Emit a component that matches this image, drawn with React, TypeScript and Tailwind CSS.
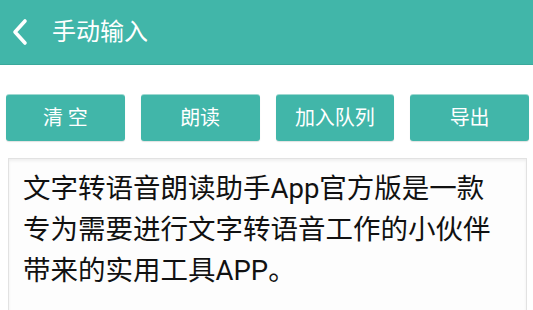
import React from "react";

const font = { fontFamily: '"Roboto", "Noto Sans CJK SC", sans-serif' };

export default function App() {
  return (
    <div className="w-[533px] h-[310px] overflow-hidden bg-white flex flex-col" style={font}>
      <div className="h-[65px] shrink-0 bg-[#41b6a9] flex items-center border-b border-[#3aa89b]">
        <svg width="20" height="28" viewBox="0 0 20 28" className="ml-[10px]">
          <path d="M15 3 L5 14 L15 25" fill="none" stroke="white" strokeWidth="3.6" strokeLinecap="round" strokeLinejoin="round" />
        </svg>
        <span className="ml-[22px] text-white text-[24px] leading-none">手动输入</span>
      </div>
      <div className="flex gap-[16px] pl-[6px] pr-[4px] mt-[30px] shrink-0">
        {["清 空", "朗读", "加入队列", "导出"].map((t) => (
          <div
            key={t}
            className="w-[119px] h-[46px] rounded-[3px] bg-[#41b6a9] shadow-[0_-1px_0_#9fd9d1,0_1px_1px_rgba(0,0,0,0.12)] flex items-center justify-center text-white text-[20px]"
          >
            {t}
          </div>
        ))}
      </div>
      <div className="mt-[17px] ml-[8px] w-[519px] h-[200px] shrink-0 border border-[#e2e2e2] bg-[#fdfdfd] shadow-[inset_0_2px_3px_rgba(0,0,0,0.06)] pl-[14px] pr-[26px] pt-[9px]">
        <p className="text-[27.5px] leading-[41px] text-[#111]">
          文字转语音朗读助手App官方版是一款专为需要进行文字转语音工作的小伙伴带来的实用工具APP。
        </p>
      </div>
    </div>
  );
}
